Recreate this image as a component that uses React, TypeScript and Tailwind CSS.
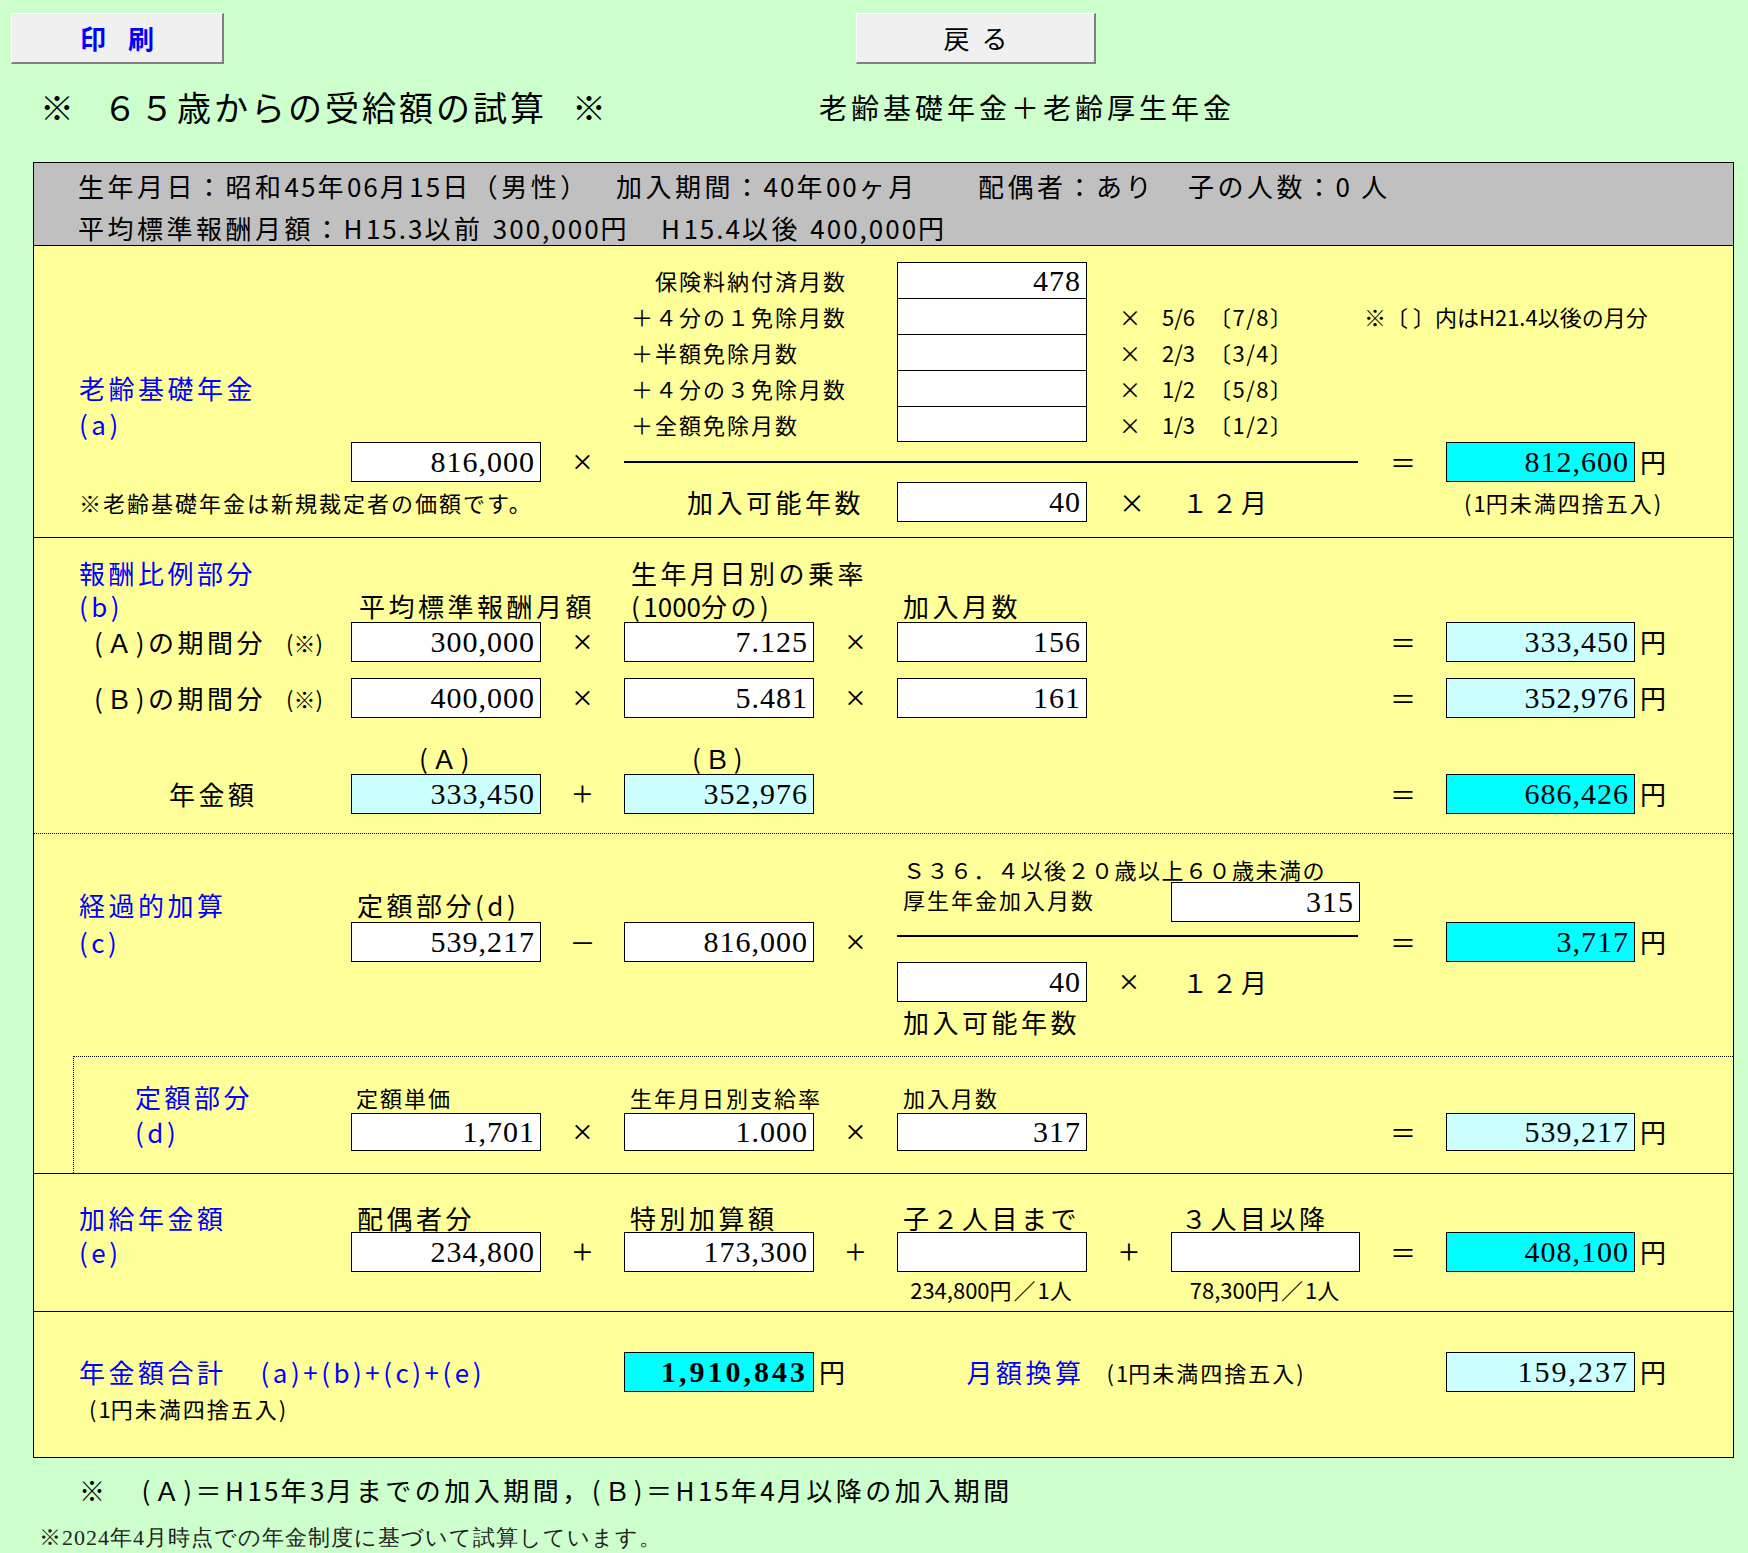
import React from "react";

const big = "text-[26px] leading-none tracking-[3.5px] whitespace-nowrap";
const mid = "text-[22px] leading-none tracking-[2px] whitespace-nowrap";
const blue = "text-[#0000ff]";
const serif = "font-['Liberation_Serif','Times_New_Roman',serif]";

// digits sit tighter than the kana/kanji around them
function T({ s, d = "tracking-[0px]" }: { s: string; d?: string }) {
  const parts = s.split(/([0-9][0-9.,]*)/);
  return (
    <>
      {parts.map((p, i) =>
        i % 2 === 1 ? (
          <span key={i} className={d}>
            {p}
          </span>
        ) : (
          p
        )
      )}
    </>
  );
}

function Box({
  v = "",
  w = "w-[190px]",
  tone = "w",
  h = "h-[40px]",
  extra = "tracking-[1px]",
}: {
  v?: string;
  w?: string;
  tone?: "w" | "c" | "l";
  h?: string;
  extra?: string;
}) {
  const bg = tone === "c" ? "bg-[#00ffff]" : tone === "l" ? "bg-[#ccffff]" : "bg-white";
  return (
    <div
      className={`${w} ${h} ${bg} shrink-0 border border-black flex items-center justify-end pr-[5px] ${serif} text-[30px] leading-none ${extra}`}
    >
      {v}
    </div>
  );
}

function Op({ s, w = "w-[83px]" }: { s: string; w?: string }) {
  const cls = s === "＝" || s === "－" ? "text-[26px]" : `${serif} text-[36px]`;
  return <div className={`${w} shrink-0 flex justify-center leading-none ${cls}`}>{s}</div>;
}

function Yen() {
  return <div className={`${big} ml-[5px]`}>円</div>;
}

const rowsA = [
  { label: "保険料納付済月数", v: "478", mult: null, left: "", pl: "pl-[31px]" },
  { label: "＋４分の１免除月数", v: "", mult: ["5/6", "〔7/8〕"], left: "", pl: "pl-[7px]" },
  { label: "＋半額免除月数", v: "", mult: ["2/3", "〔3/4〕"], left: "", pl: "pl-[7px]" },
  { label: "＋４分の３免除月数", v: "", mult: ["1/2", "〔5/8〕"], left: "老齢基礎年金", pl: "pl-[7px]" },
  { label: "＋全額免除月数", v: "", mult: ["1/3", "〔1/2〕"], left: "(a)", pl: "pl-[7px]" },
];

export default function App() {
  return (
    <div className="min-h-[1553px] w-[1748px] bg-[#ccffcc] font-['Noto_Sans_CJK_JP',sans-serif] text-black">
      {/* buttons */}
      <div className="flex pt-[13px] pl-[11px]">
        <button className="w-[213px] h-[51px] bg-[#f0f0f0] border-t border-l border-white border-r-2 border-b-2 border-r-[#808080] border-b-[#808080] flex items-center justify-center text-[26px] leading-none tracking-[22px] pl-[22px] text-[#0000ff] font-bold">
          印刷
        </button>
        <button className="ml-[632px] w-[240px] h-[51px] bg-[#f0f0f0] border-t border-l border-white border-r-2 border-b-2 border-r-[#808080] border-b-[#808080] flex items-center justify-center text-[26px] leading-none tracking-[12px] pl-[12px]">
          戻る
        </button>
      </div>

      {/* title */}
      <div className="flex items-center h-[86px]">
        <div className="pl-[40px] w-[819px] flex text-[34px] leading-none tracking-[3px] whitespace-nowrap">
          <span>※</span>
          <span className="ml-[26px]">６５歳からの受給額の試算</span>
          <span className="ml-[25px]">※</span>
        </div>
        <div className="text-[28px] leading-none tracking-[4px] whitespace-nowrap">老齢基礎年金＋老齢厚生年金</div>
      </div>

      {/* main sheet */}
      <div className="ml-[33px] mt-[12px] w-[1701px] border border-black bg-[#ffff99]">
        {/* person summary */}
        <div className="h-[83px] bg-[#c0c0c0] border-b border-black pl-[44px] pt-[8px]">
          <div className={`flex h-[30px] items-center ${big}`}>
            <div className="w-[538px]">
              <T s="生年月日：昭和45年06月15日（男性）" d="tracking-[2px]" />
            </div>
            <div className="w-[362px]">
              <T s="加入期間：40年00ヶ月" d="tracking-[2px]" />
            </div>
            <div className="w-[210px]">配偶者：あり</div>
            <div>
              <T s="子の人数：0 人" d="tracking-[2px]" />
            </div>
          </div>
          <div className={`flex h-[30px] items-center mt-[12px] ${big}`}>
            <div className="w-[583px]">
              <T s="平均標準報酬月額：H15.3以前 300,000円" d="tracking-[2px]" />
            </div>
            <div>
              <T s="H15.4以後 400,000円" d="tracking-[2px]" />
            </div>
          </div>
        </div>

        {/* (a) 老齢基礎年金 */}
        <div className="border-b border-black pt-[16px] pb-[15px] pl-[45px]">
          {rowsA.map((r, i) => (
            <div key={i} className="flex items-center h-[36px]">
              <div className={`w-[272px] shrink-0 ${big} ${blue}`}>{r.left}</div>
              <div className="w-[273px] shrink-0" />
              <div className={`w-[273px] shrink-0 ${mid} ${r.pl}`}>{r.label}</div>
              <div
                className={`w-[190px] h-full shrink-0 bg-white border-x border-t border-black flex items-center justify-end pr-[5px] ${serif} text-[30px] leading-none tracking-[1px] ${
                  i === rowsA.length - 1 ? "border-b" : ""
                }`}
              >
                {r.v}
              </div>
              {r.mult && (
                <>
                  <div className="w-[32px] shrink-0" />
                  <div className="w-[43px] shrink-0 text-[22px] leading-none">×</div>
                  <div className="w-[47px] shrink-0 text-[22px] leading-none">{r.mult[0]}</div>
                  <div className="w-[155px] shrink-0 text-[22px] leading-none tracking-[1.5px]">{r.mult[1]}</div>
                  {i === 1 && <div className="text-[22px] leading-none whitespace-nowrap">※〔 〕内はH21.4以後の月分</div>}
                </>
              )}
            </div>
          ))}
          <div className="flex items-center h-[40px]">
            <div className="w-[272px] shrink-0" />
            <Box v="816,000" />
            <Op s="×" />
            <div className="w-[736px] shrink-0">
              <div className="w-[734px] h-[2px] bg-black" />
            </div>
            <Op s="＝" w="w-[86px]" />
            <Box v="812,600" w="w-[189px]" tone="c" />
            <Yen />
          </div>
          <div className="flex items-center h-[40px]">
            <div className="w-[462px] shrink-0 text-[22px] leading-none tracking-[2px] whitespace-nowrap">
              ※老齢基礎年金は新規裁定者の価額です。
            </div>
            <div className={`w-[356px] shrink-0 flex justify-end pr-[33px] ${big}`}>加入可能年数</div>
            <Box v="40" />
            <div className="w-[95px] shrink-0 pl-[32px] text-[26px] leading-none">×</div>
            <div className={`w-[264px] shrink-0 ${big}`}>１２月</div>
            <div className={`pl-[18px] ${mid}`}>
              <T s="(1円未満四捨五入)" />
            </div>
          </div>
        </div>

        {/* (b) 報酬比例部分 */}
        <div className="border-b border-dotted border-black pt-[17px] pb-[19px] pl-[45px]">
          <div className="flex items-center h-[35px]">
            <div className={`w-[272px] shrink-0 ${big} ${blue}`}>報酬比例部分</div>
            <div className="w-[273px] shrink-0" />
            <div className={`pl-[7px] ${big}`}>生年月日別の乗率</div>
          </div>
          <div className="flex items-center h-[32px]">
            <div className={`w-[272px] shrink-0 ${big} ${blue}`}>(b)</div>
            <div className={`w-[273px] shrink-0 pl-[8px] ${big}`}>平均標準報酬月額</div>
            <div className={`w-[273px] shrink-0 pl-[7px] ${big}`}>
              <T s="(1000分の)" />
            </div>
            <div className={`pl-[6px] ${big}`}>加入月数</div>
          </div>
          {[
            ["(Ａ)の期間分", "300,000", "7.125", "156", "333,450"],
            ["(Ｂ)の期間分", "400,000", "5.481", "161", "352,976"],
          ].map((r, i) => (
            <div key={i} className={`flex items-center h-[40px] ${i === 1 ? "mt-[16px]" : ""}`}>
              <div className="w-[272px] shrink-0 flex items-center pl-[15px]">
                <span className={big}>{r[0]}</span>
                <span className="ml-[20px] text-[22px] leading-none">(※)</span>
              </div>
              <Box v={r[1]} />
              <Op s="×" />
              <Box v={r[2]} />
              <Op s="×" />
              <Box v={r[3]} />
              <div className="w-[273px] shrink-0" />
              <Op s="＝" w="w-[86px]" />
              <Box v={r[4]} w="w-[189px]" tone="l" />
              <Yen />
            </div>
          ))}
          <div className="flex items-center h-[32px] mt-[24px]">
            <div className="w-[272px] shrink-0" />
            <div className={`w-[190px] shrink-0 text-center ${big}`}>(Ａ)</div>
            <div className="w-[83px] shrink-0" />
            <div className={`w-[190px] shrink-0 text-center ${big}`}>(Ｂ)</div>
          </div>
          <div className="flex items-center h-[40px]">
            <div className={`w-[272px] shrink-0 pl-[90px] ${big}`}>年金額</div>
            <Box v="333,450" tone="l" />
            <Op s="+" />
            <Box v="352,976" tone="l" />
            <div className="w-[546px] shrink-0" />
            <Op s="＝" w="w-[86px]" />
            <Box v="686,426" w="w-[189px]" tone="c" />
            <Yen />
          </div>
        </div>

        {/* (c) 経過的加算 */}
        <div className="border-b border-black">
          <div className="pl-[45px]">
            <div className="flex items-end h-[48px] pb-[2px]">
              <div className="w-[818px] shrink-0" />
              <div className="pl-[6px] text-[22px] leading-none tracking-[1.5px] whitespace-nowrap">
                Ｓ３６．４以後２０歳以上６０歳未満の
              </div>
            </div>
            <div className="flex h-[40px]">
              <div className={`w-[272px] shrink-0 self-end pb-[4px] ${big} ${blue}`}>経過的加算</div>
              <div className={`w-[273px] shrink-0 self-end pb-[4px] pl-[6px] ${big}`}>定額部分(d)</div>
              <div className="w-[273px] shrink-0" />
              <div className={`w-[274px] shrink-0 pt-[6px] pl-[6px] ${mid}`}>厚生年金加入月数</div>
              <Box v="315" w="w-[189px]" />
            </div>
            <div className="flex items-center h-[40px]">
              <div className={`w-[272px] shrink-0 ${big} ${blue}`}>(c)</div>
              <Box v="539,217" />
              <Op s="－" />
              <Box v="816,000" />
              <Op s="×" />
              <div className="w-[463px] shrink-0 self-start pt-[13px]">
                <div className="w-[461px] h-[2px] bg-black" />
              </div>
              <Op s="＝" w="w-[86px]" />
              <Box v="3,717" w="w-[189px]" tone="c" />
              <Yen />
            </div>
            <div className="flex items-center h-[40px]">
              <div className="w-[818px] shrink-0" />
              <Box v="40" />
              <Op s="×" w="w-[84px]" />
              <div className={`pl-[11px] ${big}`}>１２月</div>
            </div>
            <div className="flex items-center h-[40px]">
              <div className="w-[818px] shrink-0" />
              <div className={`pl-[6px] ${big}`}>加入可能年数</div>
            </div>
            <div className="h-[14px]" />
          </div>

          {/* (d) 定額部分 */}
          <div className="ml-[39px] border-t border-l border-dotted border-black pt-[23px] pb-[22px] pl-[61px]">
            <div className="flex items-center h-[33px]">
              <div className={`w-[216px] shrink-0 ${big} ${blue}`}>定額部分</div>
              <div className={`w-[273px] shrink-0 pl-[5px] ${mid}`}>定額単価</div>
              <div className={`w-[273px] shrink-0 pl-[6px] ${mid}`}>生年月日別支給率</div>
              <div className={`pl-[6px] ${mid}`}>加入月数</div>
            </div>
            <div className="flex items-center h-[38px]">
              <div className={`w-[216px] shrink-0 ${big} ${blue}`}>(d)</div>
              <Box v="1,701" h="h-[38px]" />
              <Op s="×" />
              <Box v="1.000" h="h-[38px]" />
              <Op s="×" />
              <Box v="317" h="h-[38px]" />
              <div className="w-[273px] shrink-0" />
              <Op s="＝" w="w-[86px]" />
              <Box v="539,217" w="w-[189px]" h="h-[38px]" tone="l" />
              <Yen />
            </div>
          </div>
        </div>

        {/* (e) 加給年金額 */}
        <div className="border-b border-black pt-[29px] pb-[5px] pl-[45px]">
          <div className="flex items-center h-[29px]">
            <div className={`w-[272px] shrink-0 ${big} ${blue}`}>加給年金額</div>
            <div className={`w-[273px] shrink-0 pl-[6px] ${big}`}>配偶者分</div>
            <div className={`w-[273px] shrink-0 pl-[6px] ${big}`}>特別加算額</div>
            <div className={`w-[274px] shrink-0 pl-[6px] ${big}`}>子２人目まで</div>
            <div className={`pl-[10px] ${big}`}>３人目以降</div>
          </div>
          <div className="flex items-center h-[40px]">
            <div className={`w-[272px] shrink-0 ${big} ${blue}`}>(e)</div>
            <Box v="234,800" />
            <Op s="+" />
            <Box v="173,300" />
            <Op s="+" />
            <Box />
            <Op s="+" w="w-[84px]" />
            <Box w="w-[189px]" />
            <Op s="＝" w="w-[86px]" />
            <Box v="408,100" w="w-[189px]" tone="c" />
            <Yen />
          </div>
          <div className="flex items-center h-[34px]">
            <div className="w-[818px] shrink-0" />
            <div className={`w-[190px] shrink-0 text-center ${mid}`}>
              <T s="234,800円／1人" />
            </div>
            <div className="w-[84px] shrink-0" />
            <div className={`w-[189px] shrink-0 text-center ${mid}`}>
              <T s="78,300円／1人" />
            </div>
          </div>
        </div>

        {/* total */}
        <div className="pt-[40px] pb-[33px] pl-[45px]">
          <div className="flex items-center h-[40px]">
            <div className={`w-[545px] shrink-0 flex ${big} ${blue}`}>
              <span>年金額合計</span>
              <span className="ml-[34px]">(a)+(b)+(c)+(e)</span>
            </div>
            <Box v="1,910,843" tone="c" extra="tracking-[3px] font-bold" />
            <div className="w-[632px] shrink-0 flex items-center">
              <Yen />
              <span className={`ml-[118px] ${big} ${blue}`}>月額換算</span>
              <span className={`ml-[22px] ${mid}`}>
                <T s="(1円未満四捨五入)" />
              </span>
            </div>
            <Box v="159,237" w="w-[189px]" tone="l" extra="tracking-[2px]" />
            <Yen />
          </div>
          <div className="flex items-center h-[32px]">
            <div className={`pl-[10px] ${mid}`}>
              <T s="(1円未満四捨五入)" />
            </div>
          </div>
        </div>
      </div>

      {/* notes */}
      <div className={`flex items-center h-[64px] pl-[79px] ${big}`}>
        <span>※</span>
        <span className="ml-[33px]">
          <T s="(Ａ)＝H15年3月までの加入期間，(Ｂ)＝H15年4月以降の加入期間" d="tracking-[2px]" />
        </span>
      </div>
      <div className={`flex items-center h-[31px] pl-[39px] ${serif} text-[22px] leading-none tracking-[1px] text-[#222] whitespace-nowrap`}>
        ※2024年4月時点での年金制度に基づいて試算しています。
      </div>
    </div>
  );
}
